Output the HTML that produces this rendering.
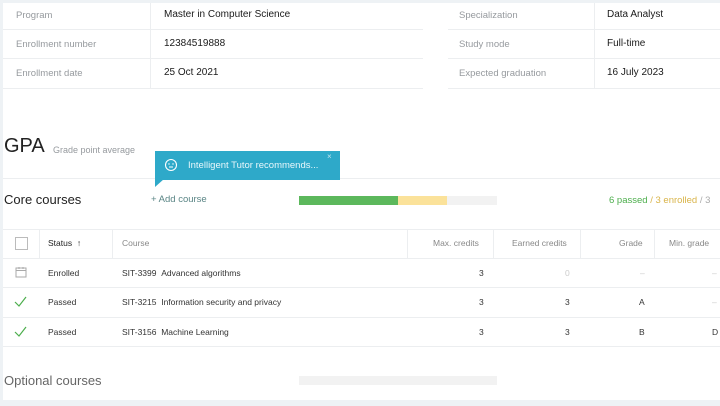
<!DOCTYPE html>
<html><head><style>
body{margin:0;width:720px;height:406px;background:#eef2f5;font-family:"Liberation Sans",sans-serif;position:relative;overflow:hidden}
.a{position:absolute;white-space:nowrap}
.l{color:#969a9e;font-size:9.5px}
.v{color:#1a1a1a;font-size:10px}
.hl{position:absolute;height:1px;background:#eceef0}
.vl{position:absolute;width:1px;background:#eceef0}
.t{font-size:8.5px;color:#333}
.h{font-size:8.5px;color:#888}
</style></head><body>
<div class="a" style="left:3px;top:3px;width:717px;height:397px;background:#fff"></div>
<div class="hl" style="left:3px;top:29px;width:420px"></div>
<div class="hl" style="left:3px;top:58px;width:420px"></div>
<div class="hl" style="left:3px;top:88px;width:420px"></div>
<div class="hl" style="left:448px;top:29px;width:272px"></div>
<div class="hl" style="left:448px;top:58px;width:272px"></div>
<div class="hl" style="left:448px;top:88px;width:272px"></div>
<div class="vl" style="left:150px;top:3px;height:85px"></div>
<div class="vl" style="left:594px;top:3px;height:85px"></div>
<div class="a l" style="left:16px;top:10px">Program</div>
<div class="a l" style="left:16px;top:39px">Enrollment number</div>
<div class="a l" style="left:16px;top:68px">Enrollment date</div>
<div class="a v" style="left:164px;top:9px">Master in Computer Science</div>
<div class="a v" style="left:164px;top:38px">12384519888</div>
<div class="a v" style="left:164px;top:67px">25 Oct 2021</div>
<div class="a l" style="left:459px;top:10px">Specialization</div>
<div class="a l" style="left:459px;top:39px">Study mode</div>
<div class="a l" style="left:459px;top:68px">Expected graduation</div>
<div class="a v" style="left:607px;top:9px">Data Analyst</div>
<div class="a v" style="left:607px;top:38px">Full-time</div>
<div class="a v" style="left:607px;top:67px">16 July 2023</div>
<div class="a" style="left:4px;top:135px;font-size:20px;color:#222">GPA</div>
<div class="a l" style="left:53px;top:145px;font-size:9px">Grade point average</div>
<div class="hl" style="left:3px;top:178px;width:717px"></div>
<div class="a" style="left:155px;top:151px;width:185px;height:29px;background:#2ea9c9"></div>
<svg class="a" style="left:155px;top:179px" width="9" height="8"><polygon points="0,0 9,0 0,8" fill="#2ea9c9"/></svg>
<svg class="a" style="left:164px;top:158px" width="14" height="14"><circle cx="7" cy="7" r="5.5" fill="none" stroke="#fff" stroke-width="1.1"/><circle cx="5" cy="6" r=".7" fill="#fff"/><circle cx="9" cy="6" r=".7" fill="#fff"/><path d="M5 9h4" stroke="#fff" stroke-width="1"/></svg>
<div class="a" style="left:188px;top:160px;font-size:9.5px;color:#e8f7fb">Intelligent Tutor recommends...</div>
<div class="a" style="left:327px;top:152px;font-size:8px;color:#bfe6f0">×</div>
<div class="a" style="left:4px;top:192px;font-size:13px;color:#222">Core courses</div>
<div class="a" style="left:151px;top:194px;font-size:9.5px;color:#5a8585">+ Add course</div>
<div class="a" style="left:299px;top:196px;width:99px;height:9px;background:#5cb85c"></div>
<div class="a" style="left:398px;top:196px;width:49px;height:9px;background:#fbe29a"></div>
<div class="a" style="left:447px;top:196px;width:50px;height:9px;background:#f2f2f2"></div>
<div class="a" style="left:609px;top:195px;font-size:9.5px;color:#4cae4c">6 passed <span style="color:#d9b44a">/ 3 enrolled</span> <span style="color:#aaa">/ 3</span></div>
<div class="hl" style="left:3px;top:229px;width:717px"></div>
<div class="hl" style="left:3px;top:258px;width:717px"></div>
<div class="hl" style="left:3px;top:287px;width:717px"></div>
<div class="hl" style="left:3px;top:317px;width:717px"></div>
<div class="hl" style="left:3px;top:346px;width:717px"></div>
<div class="vl" style="left:39px;top:229px;height:29px"></div>
<div class="vl" style="left:112px;top:229px;height:29px"></div>
<div class="vl" style="left:407px;top:229px;height:29px"></div>
<div class="vl" style="left:493px;top:229px;height:29px"></div>
<div class="vl" style="left:580px;top:229px;height:29px"></div>
<div class="vl" style="left:654px;top:229px;height:29px"></div>
<div class="a" style="left:15px;top:237px;width:11px;height:11px;border:1px solid #bbb"></div>
<div class="a t" style="left:48px;top:238px;color:#222">Status &nbsp;↑</div>
<div class="a h" style="left:122px;top:238px">Course</div>
<div class="a h" style="left:433px;top:238px">Max. credits</div>
<div class="a h" style="left:512px;top:238px">Earned credits</div>
<div class="a h" style="left:619px;top:238px">Grade</div>
<div class="a h" style="left:669px;top:238px">Min. grade</div>
<svg class="a" style="left:15px;top:266px" width="12" height="12"><rect x="1" y="2" width="10" height="9" fill="none" stroke="#aaa"/><path d="M1 4.5h10M4 1v2M8 1v2" stroke="#aaa"/></svg>
<div class="a t" style="left:48px;top:268px">Enrolled</div>
<div class="a t" style="left:122px;top:268px">SIT-3399 &nbsp;Advanced algorithms</div>
<div class="a t" style="left:479px;top:268px">3</div>
<div class="a t" style="left:565px;top:268px;color:#ccc">0</div>
<div class="a t" style="left:640px;top:268px;color:#ccc">–</div>
<div class="a t" style="left:712px;top:268px;color:#ccc">–</div>
<svg class="a" style="left:14px;top:296px" width="13" height="11"><path d="M1 6l4 4 7-9" fill="none" stroke="#4cae4c" stroke-width="1.2"/></svg>
<div class="a t" style="left:48px;top:297px">Passed</div>
<div class="a t" style="left:122px;top:297px">SIT-3215 &nbsp;Information security and privacy</div>
<div class="a t" style="left:479px;top:297px">3</div>
<div class="a t" style="left:565px;top:297px">3</div>
<div class="a t" style="left:639px;top:297px">A</div>
<div class="a t" style="left:712px;top:297px;color:#ccc">–</div>
<svg class="a" style="left:14px;top:326px" width="13" height="11"><path d="M1 6l4 4 7-9" fill="none" stroke="#4cae4c" stroke-width="1.2"/></svg>
<div class="a t" style="left:48px;top:327px">Passed</div>
<div class="a t" style="left:122px;top:327px">SIT-3156 &nbsp;Machine Learning</div>
<div class="a t" style="left:479px;top:327px">3</div>
<div class="a t" style="left:565px;top:327px">3</div>
<div class="a t" style="left:639px;top:327px">B</div>
<div class="a t" style="left:712px;top:327px">D</div>
<div class="a" style="left:4px;top:373px;font-size:13px;color:#666">Optional courses</div>
<div class="a" style="left:299px;top:376px;width:198px;height:9px;background:#f2f2f2"></div>
</body></html>
